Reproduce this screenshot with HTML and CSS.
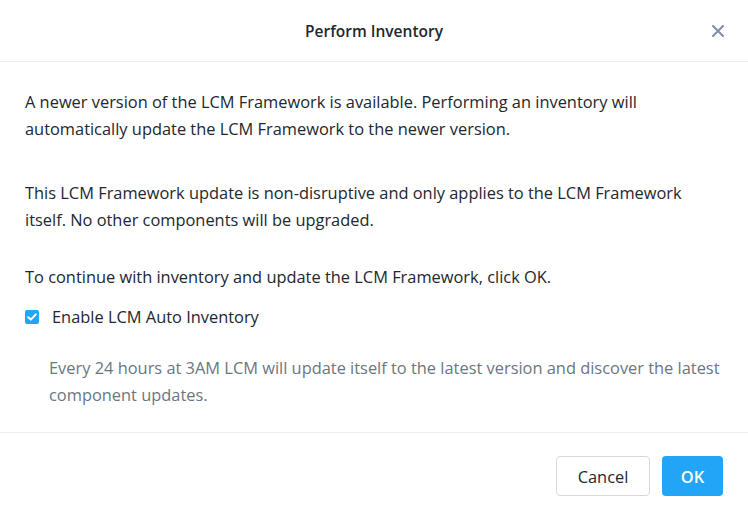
FILE: index.html
```html
<!DOCTYPE html>
<html>
<head>
<meta charset="utf-8">
<link rel="stylesheet" href="styles.css">
</head>
<body>
<div class="modal">
  <div class="header">
    <div class="title">Perform Inventory</div>
    <button class="close" aria-label="Close">
      <svg width="12" height="12" viewBox="0 0 12 12"><path d="M1 1L11 11M11 1L1 11" stroke="#7d8ea3" stroke-width="2" stroke-linecap="round"/></svg>
    </button>
  </div>
  <div class="body">
    <p class="para">A newer version of the LCM Framework is available. Performing an inventory will automatically update the LCM Framework to the newer version.</p>
    <p class="para second">This LCM Framework update is non-disruptive and only applies to the LCM Framework itself. No other components will be upgraded.</p>
    <p class="para last">To continue with inventory and update the LCM Framework, click OK.</p>
    <label class="check">
      <span class="box"><svg width="10" height="8" viewBox="0 0 10 8"><path d="M1.2 4.2L3.8 6.6L8.8 1.4" stroke="#fff" stroke-width="2" fill="none" stroke-linecap="round" stroke-linejoin="round"/></svg></span>
      <span class="check-label">Enable LCM Auto Inventory</span>
    </label>
    <p class="desc">Every 24 hours at 3AM LCM will update itself to the latest version and discover the latest component updates.</p>
  </div>
  <div class="footer">
    <button class="btn cancel">Cancel</button>
    <button class="btn ok">OK</button>
  </div>
</div>
</body>
</html>
```
FILE: styles.css
```css
* { box-sizing: border-box; }
html, body { margin: 0; padding: 0; background: #fff; }
body {
  font-family: "Open Sans", "Lato", sans-serif;
  color: #22272e;
  width: 748px;
  height: 519px;
  overflow: hidden;
}
.modal { display: flex; flex-direction: column; width: 748px; }
.header {
  height: 62px;
  border-bottom: 1px solid #eceef0;
  display: flex;
  align-items: center;
  justify-content: center;
  position: relative;
}
.title { font-size: 15.5px; font-weight: 600; color: #22272e; }
.close {
  position: absolute;
  right: 24px;
  top: 25px;
  border: 0;
  background: none;
  padding: 0;
  width: 12px;
  height: 12px;
  display: flex;
}
.body { padding: 26px 25px 0 25px; }
.para { margin: 0 0 37px 0; font-size: 16.4px; line-height: 27px; }
.para.second { margin-bottom: 30px; }
.para.last { margin-bottom: 13px; }
.check { display: flex; align-items: center; gap: 13px; height: 27px; }
.box {
  width: 14px; height: 14px; border-radius: 2px; background: #22a5f7;
  display: flex; align-items: center; justify-content: center;
}
.check-label { font-size: 16.4px; }
.desc {
  margin: 24px 0 0 24px;
  font-size: 16.4px;
  line-height: 27px;
  color: #6b7682;
}
.footer {
  margin-top: 24px;
  border-top: 1px solid #eceef0;
  display: flex;
  justify-content: flex-end;
  gap: 12px;
  padding: 23px 25px 0 0;
}
.btn {
  height: 40px;
  border-radius: 4px;
  font-family: inherit;
  font-size: 16.4px;
  padding: 0;
}
.cancel { width: 94px; background: #fff; border: 1px solid #d6dade; color: #22272e; }
.ok { width: 61px; background: #22a5f7; border: 0; color: #fff; font-weight: 600; }
```
